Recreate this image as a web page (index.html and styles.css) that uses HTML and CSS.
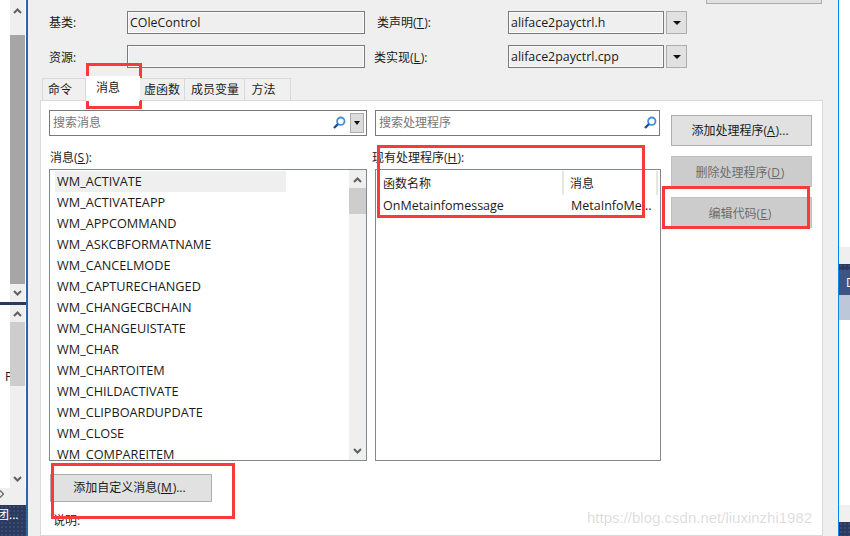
FILE: index.html
```html
<!DOCTYPE html>
<html lang="zh-CN">
<head>
<meta charset="utf-8">
<title>MFC 类向导</title>
<link rel="stylesheet" href="styles.css">
</head>
<body>
<div class="desk">
  <aside class="side-left">
    <div class="pane pane-top">
      <div class="pane-body"></div>
      <div class="vbar">
        <div class="arrow-cell arrow-cell-top"><svg class="chev" viewBox="0 0 9 6"><path d="M1 5L4.5 1.5L8 5"/></svg></div>
        <div class="thumb thumb-dark"></div>
        <div class="arrow-cell arrow-cell-foot"><svg class="chev" viewBox="0 0 9 6"><path d="M1 1L4.5 4.5L8 1"/></svg></div>
      </div>
      <div class="pane-edge"></div>
    </div>
    <div class="navy-rule"></div>
    <div class="pane pane-bottom">
      <div class="pane-body pane-letter">P</div>
      <div class="vbar">
        <div class="arrow-cell arrow-cell-up"><svg class="chev" viewBox="0 0 9 6"><path d="M1 5L4.5 1.5L8 5"/></svg></div>
        <div class="thumb thumb-light"></div>
        <div class="track-fill"></div>
        <div class="arrow-cell arrow-cell-low"><svg class="chev" viewBox="0 0 9 6"><path d="M1 1L4.5 4.5L8 1"/></svg></div>
      </div>
      <div class="pane-edge"></div>
    </div>
    <div class="strip-grey"><svg class="mini-arrow" viewBox="0 0 4 8"><path d="M0 0.5L3.5 4L0 7.5"/></svg></div>
    <div class="navy-foot"><span class="foot-text">团...</span></div>
  </aside>

  <main class="dialog">
    <div class="topbar"><div class="top-button"></div></div>

    <div class="form-grid">
      <label class="form-label">基类:</label>
      <div class="readonly">COleControl</div>
      <label class="form-label mid-a">类声明(<u>T</u>):</label>
      <div class="readonly">aliface2payctrl.h</div>
      <div class="drop"><span class="caret"></span></div>

      <label class="form-label form-label-low">资源:</label>
      <div class="readonly"></div>
      <label class="form-label form-label-low mid-b">类实现(<u>L</u>):</label>
      <div class="readonly">aliface2payctrl.cpp</div>
      <div class="drop"><span class="caret"></span></div>
    </div>

    <nav class="tabs">
      <div class="tab tab-1">命令</div>
      <div class="tab tab-active">消息</div>
      <div class="tab tab-3">虚函数</div>
      <div class="tab tab-4">成员变量</div>
      <div class="tab tab-5">方法</div>
    </nav>

    <section class="panel">
      <div class="col col-left">
        <div class="search">
          <span class="search-text">搜索消息</span>
          <svg class="lens" viewBox="0 0 14 14"><circle cx="8.8" cy="5.2" r="3.7" class="lens-ring"/><path d="M6 8L2 12" class="lens-handle"/></svg>
          <div class="search-drop"><span class="caret"></span></div>
        </div>
        <div class="field-label">消息(<u>S</u>):</div>
        <div class="list">
          <div class="items">
            <div class="item item-selected">WM_ACTIVATE</div>
            <div class="item">WM_ACTIVATEAPP</div>
            <div class="item">WM_APPCOMMAND</div>
            <div class="item">WM_ASKCBFORMATNAME</div>
            <div class="item">WM_CANCELMODE</div>
            <div class="item">WM_CAPTURECHANGED</div>
            <div class="item">WM_CHANGECBCHAIN</div>
            <div class="item">WM_CHANGEUISTATE</div>
            <div class="item">WM_CHAR</div>
            <div class="item">WM_CHARTOITEM</div>
            <div class="item">WM_CHILDACTIVATE</div>
            <div class="item">WM_CLIPBOARDUPDATE</div>
            <div class="item">WM_CLOSE</div>
            <div class="item">WM_COMPAREITEM</div>
          </div>
          <div class="list-bar">
            <div class="list-arrow"><svg class="chev" viewBox="0 0 9 6"><path d="M1 5L4.5 1.5L8 5"/></svg></div>
            <div class="list-thumb"></div>
            <div class="track-fill"></div>
            <div class="list-arrow"><svg class="chev" viewBox="0 0 9 6"><path d="M1 1L4.5 4.5L8 1"/></svg></div>
          </div>
        </div>
        <div class="custom-button">添加自定义消息(<u>M</u>)...</div>
        <div class="note-label">说明:</div>
      </div>

      <div class="col col-mid">
        <div class="search search-mid">
          <span class="search-text">搜索处理程序</span>
          <svg class="lens" viewBox="0 0 14 14"><circle cx="8.8" cy="5.2" r="3.7" class="lens-ring"/><path d="M6 8L2 12" class="lens-handle"/></svg>
        </div>
        <div class="field-label field-label-mid">现有处理程序(<u>H</u>):</div>
        <div class="table">
          <div class="thead">
            <div class="th th-name">函数名称</div>
            <div class="th th-msg">消息</div>
            <div class="th th-rest"></div>
          </div>
          <div class="trow">
            <div class="td td-name">OnMetainfomessage</div>
            <div class="td td-msg">MetaInfoMe...</div>
          </div>
        </div>
      </div>

      <div class="col col-right">
        <div class="action">添加处理程序(<u>A</u>)...</div>
        <div class="action action-off">删除处理程序(<u>D</u>)</div>
        <div class="action action-off">编辑代码(<u>E</u>)</div>
      </div>
    </section>
  </main>

  <aside class="side-right">
    <div class="r-white"></div>
    <div class="r-grey"></div>
    <div class="r-dots"></div>
    <div class="r-navy">D</div>
    <div class="r-steel"></div>
    <div class="r-fill"></div>
    <div class="r-grey2"></div>
    <div class="r-foot"></div>
  </aside>

  <div class="mark mark-tab"></div>
  <div class="mark mark-table"></div>
  <div class="mark mark-edit"></div>
  <div class="mark mark-custom"></div>
  <div class="watermark">https://blog.csdn.net/liuxinzhi1982</div>
</div>
</body>
</html>
```
FILE: styles.css
```css
* { box-sizing: border-box; }
html, body { margin: 0; padding: 0; background: #fff; }
body {
  font-family: "Open Sans", "Noto Sans CJK SC", sans-serif;
  font-size: 12px;
  color: #1a1a1a;
}
u { text-decoration: underline; letter-spacing: 1px; }
.desk {
  position: relative;
  display: flex;
  width: 850px;
  height: 536px;
  overflow: hidden;
}

/* left neighbour windows */
.side-left { width: 26px; flex: none; display: flex; flex-direction: column; background: #fff; }
.pane { display: flex; }
.pane-top { height: 302px; }
.pane-bottom { height: 183px; }
.pane-body { width: 10px; background: #fff; }
.pane-edge { width: 1px; background: #fff; }
.pane-letter { padding-top: 64px; padding-left: 5px; overflow: hidden; line-height: 16px; white-space: nowrap; }
.vbar { width: 15px; display: flex; flex-direction: column; background: #efefef; }
.arrow-cell { display: flex; align-items: center; justify-content: center; }
.arrow-cell-top { height: 35px; padding-bottom: 14px; background: #efefef; }
.arrow-cell-foot { height: 18px; }
.arrow-cell-up { height: 17px; }
.arrow-cell-low { height: 20px; padding-top: 2px; }
.thumb-dark { flex: 1; background: #a6a6a6; }
.thumb-light { height: 64px; background: #cdcdcd; }
.track-fill { flex: 1; background: #efefef; }
.chev { width: 9px; height: 6px; display: block; fill: none; stroke: #606060; stroke-width: 2; }
.navy-rule { height: 3px; background: #293a5e; }
.strip-grey { height: 17px; background: #efefef; padding-top: 2px; }
.mini-arrow { width: 4px; height: 8px; display: block; fill: none; stroke: #707070; stroke-width: 1.5; }
.navy-foot {
  flex: 1;
  background-color: #293a5e;
  background-image: radial-gradient(#3a4c74 0.7px, transparent 0.8px);
  background-size: 4px 4px;
  color: #fff;
  line-height: 18px;
  padding-top: 1px;
  white-space: nowrap;
  overflow: hidden;
}
.foot-text { font-size: 12px; display: block; margin-left: -3px; }

/* main dialog */
.dialog {
  width: 813px;
  flex: none;
  background: #efefef;
  border-left: 2px solid #2f64a6;
  border-right: 1px solid #0a84e8;
  display: flex;
  flex-direction: column;
}
.topbar { height: 11px; display: flex; justify-content: flex-end; padding-right: 16px; }
.top-button { width: 116px; height: 4px; background: #e1e1e1; border: 1px solid #adadad; border-top: 0; }

.form-grid {
  display: grid;
  grid-template-columns: 99px 238px 143px 156px 23px;
  grid-auto-rows: 23px;
  row-gap: 11px;
  align-items: stretch;
}
.form-label { padding-left: 21px; line-height: 24px; white-space: nowrap; }
.form-label-low { line-height: 26px; }
.form-label.mid-a { padding-left: 12px; }
.form-label.mid-b { padding-left: 9px; }
.readonly {
  border: 1px solid #7a7a7a;
  box-shadow: inset 0 0 0 1px #fbfbfb;
  background: #efefef;
  padding-left: 2px;
  line-height: 21px;
  font-size: 12.4px;
  white-space: nowrap;
}
.drop {
  margin-left: 2px;
  background: #e1e1e1;
  border: 1px solid #adadad;
  display: flex;
  align-items: center;
  justify-content: center;
}
.caret { width: 0; height: 0; border-left: 4px solid transparent; border-right: 4px solid transparent; border-top: 4px solid #111; }

.tabs { display: flex; height: 22px; margin-top: 10px; padding-left: 14px; position: relative; z-index: 1; }
.tab {
  background: #f0f0f0;
  border: 1px solid #d9d9d9;
  border-bottom: 0;
  border-left: 0;
  text-align: center;
  line-height: 21px;
  white-space: nowrap;
}
.tab-1 { width: 44px; border-left: 1px solid #d9d9d9; padding-right: 8px; }
.tab-active { width: 54px; background: #fff; height: 25px; margin-top: -2px; border: 0; line-height: 24px; padding-right: 10px; }
.tab-3 { width: 45px; }
.tab-4 { width: 60px; padding-left: 1px; }
.tab-5 { width: 46px; padding-right: 8px; }

.panel {
  flex: 1;
  margin-left: 12px;
  margin-right: 15px;
  background: #fff;
  border: 1px solid #d9d9d9;
  padding: 9px 0 0 8px;
  display: flex;
  overflow: hidden;
}
.col { display: flex; flex-direction: column; flex: none; }
.col-left { width: 318px; }
.col-mid { width: 286px; margin-left: 8px; }
.col-right { width: 141px; margin-left: 10px; padding-top: 5px; gap: 10px; }

.search {
  height: 26px;
  border: 1px solid #7a7a7a;
  background: #fff;
  display: flex;
  align-items: center;
  padding: 0 2px 0 3px;
  flex: none;
}
.search-mid { margin-right: 1px; }
.search-text { flex: 1; color: #767676; white-space: nowrap; line-height: 23px; padding-bottom: 1px; }
.lens { width: 14px; height: 14px; flex: none; margin-right: 4px; fill: none; }
.lens-ring { stroke: #3f8edb; stroke-width: 1.8; }
.lens-handle { stroke: #1f4f97; stroke-width: 2.4; }
.search-mid .lens { margin-right: 0; }
.search-drop {
  width: 14px;
  height: 20px;
  background: #dcdcdc;
  border: 1px solid #adadad;
  display: flex;
  align-items: center;
  justify-content: center;
  flex: none;
}
.search-drop .caret { border-left-width: 3.5px; border-right-width: 3.5px; }

.field-label { margin-top: 13px; height: 17px; margin-bottom: 3px; line-height: 17px; padding-left: 1px; white-space: nowrap; }
.field-label-mid { margin-left: -3px; padding-left: 0; }

.list {
  height: 292px;
  flex: none;
  border: 1px solid #828790;
  display: flex;
  background: #fff;
}
.items { flex: 1; padding-top: 1px; overflow: hidden; min-width: 0; }
.item { height: 21px; line-height: 21px; padding-left: 7px; white-space: nowrap; font-size: 12.7px; }
.item-selected { margin-left: 5px; padding-left: 2px; width: 231px; background: #efefef; }
.list-bar { width: 17px; flex: none; padding: 1px 0; display: flex; flex-direction: column; background: #efefef; }
.list-arrow { height: 17px; display: flex; align-items: center; justify-content: center; flex: none; }
.list-thumb { height: 26px; background: #cdcdcd; flex: none; }

.custom-button {
  margin: 13px 0 0 1px;
  width: 162px;
  height: 28px;
  flex: none;
  background: #e1e1e1;
  border: 1px solid #adadad;
  line-height: 26px;
  text-align: center;
  white-space: nowrap;
  padding-right: 3px;
}
.note-label { margin-top: 10px; padding-left: 4px; line-height: 17px; }

.table { height: 292px; flex: none; border: 1px solid #828790; background: #fff; }
.thead { display: flex; height: 24px; margin-top: 1px; }
.th { flex: none; line-height: 26px; padding-left: 7px; border-right: 2px solid #e6e6e6; white-space: nowrap; }
.th-name { width: 188px; }
.th-msg { width: 94px; padding-left: 6px; }
.th-rest { flex: 1; border: 0; padding: 0; }
.trow { display: flex; height: 20px; }
.td { line-height: 22px; padding-left: 7px; white-space: nowrap; font-size: 12.5px; }
.td-name { width: 188px; }
.td-msg { padding-left: 7px; }

.action {
  height: 31px;
  flex: none;
  background: #e1e1e1;
  border: 1px solid #adadad;
  line-height: 29px;
  text-align: center;
  white-space: nowrap;
  padding-right: 3px;
}
.action-off { background: #cccccc; border-color: #bfbfbf; color: #6d6d6d; line-height: 31px; }

/* right neighbour windows */
.side-right { flex: 1; display: flex; flex-direction: column; background: #fff; overflow: hidden; }
.r-white { height: 247px; }
.r-grey { height: 17px; background: #efefef; }
.r-dots {
  height: 6px;
  background-color: #293a5e;
  background-image: radial-gradient(#3a4c74 0.7px, transparent 0.8px);
  background-size: 4px 4px;
}
.r-navy { height: 25px; background: #3d5484; color: #fff; padding-left: 7px; line-height: 25px; white-space: nowrap; }
.r-steel { height: 25px; background: #bcc7d9; }
.r-fill { flex: 1; }
.r-grey2 { height: 17px; background: #f0f0f0; }
.r-foot {
  height: 14px;
  background-color: #293a5e;
  background-image: radial-gradient(#3a4c74 0.7px, transparent 0.8px);
  background-size: 4px 4px;
}

/* hand-drawn red annotations over the screenshot */
.mark { position: absolute; border: 3px solid #f83a3a; pointer-events: none; }
.mark-tab { left: 86px; top: 63px; width: 56px; height: 46px; }
.mark-table { left: 377px; top: 145px; width: 268px; height: 73px; }
.mark-edit { left: 662px; top: 186px; width: 148px; height: 43px; }
.mark-custom { left: 51px; top: 463px; width: 184px; height: 56px; }

.watermark {
  position: absolute;
  left: 587px;
  top: 508px;
  font-family: "Liberation Sans", sans-serif;
  font-size: 15px;
  line-height: 20px;
  color: rgba(130, 130, 130, 0.28);
  white-space: nowrap;
}
```
